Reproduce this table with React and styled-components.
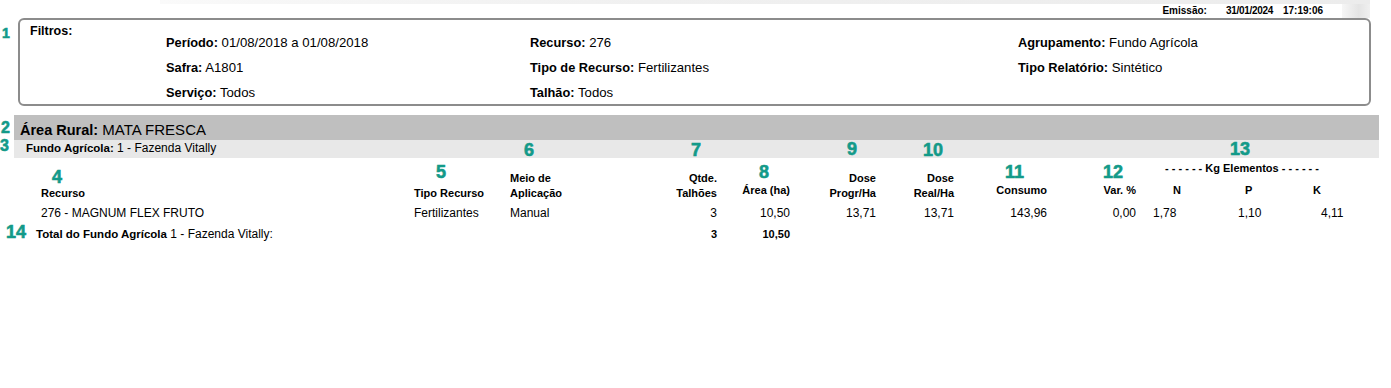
import styled, { createGlobalStyle } from "styled-components";

const GlobalStyle = createGlobalStyle`
  body {
    margin: 0;
    background: #fff;
    color: #000;
    font-family: "Liberation Sans", Arial, sans-serif;
  }
`;

const COLS = "378px 96px 140px 67px 73px 86px 78px 93px 89px 74px 60px 80px";

const Page = styled.div`
  position: relative;
  width: 1391px;
  height: 388px;
  overflow: hidden;
`;

const TopStrip = styled.div`
  display: flex;
  flex-direction: column;
  height: 18px;
`;

const FaintBar = styled.div`
  height: 4px;
  margin: 0 21px 0 160px;
  background: linear-gradient(to right, #fafafa 0%, #f7f7f7 8%, #f0f0f0 40%, #ececec 100%);
`;

const EmissaoRow = styled.div`
  display: flex;
  align-items: center;
  justify-content: flex-end;
  height: 14px;
  padding-right: 21px;
  font-size: 10px;
  font-weight: bold;
  line-height: 12px;
`;

const EmissaoDate = styled.span`
  margin-left: 19px;
  letter-spacing: -0.3px;
`;

const EmissaoTime = styled.span`
  margin-left: 10px;
`;

const Shade = styled.div`
  width: 28px;
  height: 14px;
  margin-left: 19px;
  background: linear-gradient(to right, #f6f6f6, #e4e4e4 60%, #f0f0f0);
`;

const FilterBox = styled.div`
  box-sizing: border-box;
  height: 88px;
  margin: 0 20px 0 18px;
  border: 2px solid #8c8c8c;
  border-radius: 6px;
  padding: 10px 0 0 10px;
  display: grid;
  grid-template-columns: 136px 364px 488px 1fr;
  grid-auto-rows: 25px;
  font-size: 13.2px;
  line-height: 25px;
`;

const FilterTitle = styled.div`
  font-size: 12.5px;
  font-weight: bold;
  line-height: 16px;
  margin-top: -7px;
`;

const FilterItem = styled.div`
  white-space: nowrap;
  b {
    font-size: 12.8px;
    font-weight: bold;
  }
`;

const AreaBand = styled.div`
  box-sizing: border-box;
  height: 25px;
  margin: 9px 12px 0 14px;
  padding: 5px 0 0 6px;
  background: #bfbfbf;
  font-size: 15px;
  line-height: 20px;
  b {
    font-size: 14.5px;
  }
`;

const FundoBand = styled.div`
  box-sizing: border-box;
  height: 18px;
  margin: 0 12px 0 14px;
  padding-left: 12px;
  background: #e8e8e8;
  font-size: 12px;
  line-height: 16px;
  b {
    font-size: 11.5px;
  }
`;

const Table = styled.div`
  margin: 3px 0 0 36px;
`;

const Row = styled.div`
  display: grid;
  grid-template-columns: ${COLS};
  align-items: ${(p) => (p.$head ? "end" : "start")};
  margin-top: ${(p) => p.$mt || 0}px;
  font-size: ${(p) => (p.$head ? 11 : 12)}px;
  font-weight: ${(p) => (p.$head ? "bold" : "normal")};
  line-height: 15px;
  white-space: nowrap;
`;

const Cell = styled.div`
  text-align: ${(p) => p.$align || "left"};
  padding-left: ${(p) => p.$pl || 0}px;
  padding-bottom: ${(p) => p.$pb || 0}px;
  font-weight: ${(p) => (p.$bold ? "bold" : "inherit")};
  font-size: ${(p) => (p.$fs ? `${p.$fs}px` : "inherit")};
  grid-column: ${(p) => p.$span || "auto"};
`;

const ElementGroup = styled.div`
  grid-column: span 3;
  display: grid;
  grid-template-columns: 74px 60px 80px;
`;

const KgLine = styled.div`
  grid-column: 1 / -1;
  padding-left: 29px;
  margin-bottom: 7px;
`;

const Marker = styled.span`
  position: absolute;
  left: ${(p) => p.$x}px;
  top: ${(p) => p.$y}px;
  font-size: ${(p) => p.$size || 18}px;
  font-weight: bold;
  line-height: 1;
  color: #139a89;
  -webkit-text-stroke: 0.6px #139a89;
`;

const markers = [
  { n: 1, x: 2, y: 26, size: 14 },
  { n: 2, x: 1, y: 120, size: 16 },
  { n: 3, x: 0, y: 138, size: 16 },
  { n: 4, x: 52, y: 168 },
  { n: 5, x: 436, y: 163 },
  { n: 6, x: 524, y: 141 },
  { n: 7, x: 691, y: 141 },
  { n: 8, x: 759, y: 163 },
  { n: 9, x: 847, y: 140 },
  { n: 10, x: 923, y: 141 },
  { n: 11, x: 1005, y: 163 },
  { n: 12, x: 1103, y: 163 },
  { n: 13, x: 1230, y: 140 },
  { n: 14, x: 6, y: 223 },
];

export default function App() {
  return (
    <Page>
      <GlobalStyle />
      <TopStrip>
        <FaintBar />
        <EmissaoRow>
          <span>Emissão:</span>
          <EmissaoDate>31/01/2024</EmissaoDate>
          <EmissaoTime>17:19:06</EmissaoTime>
          <Shade />
        </EmissaoRow>
      </TopStrip>

      <FilterBox>
        <FilterTitle>Filtros:</FilterTitle>
        <FilterItem><b>Período:</b> 01/08/2018 a 01/08/2018</FilterItem>
        <FilterItem><b>Recurso:</b> 276</FilterItem>
        <FilterItem><b>Agrupamento:</b> Fundo Agrícola</FilterItem>
        <div />
        <FilterItem><b>Safra:</b> A1801</FilterItem>
        <FilterItem><b>Tipo de Recurso:</b> Fertilizantes</FilterItem>
        <FilterItem><b>Tipo Relatório:</b> Sintético</FilterItem>
        <div />
        <FilterItem><b>Serviço:</b> Todos</FilterItem>
        <FilterItem><b>Talhão:</b> Todos</FilterItem>
      </FilterBox>

      <AreaBand><b>Área Rural:</b> MATA FRESCA</AreaBand>
      <FundoBand><b>Fundo Agrícola:</b> 1 - Fazenda Vitally</FundoBand>

      <Table>
        <Row $head>
          <Cell $pl={5}>Recurso</Cell>
          <Cell>Tipo Recurso</Cell>
          <Cell>Meio de<br />Aplicação</Cell>
          <Cell $align="right">Qtde.<br />Talhões</Cell>
          <Cell $align="right" $pb={3}>Área (ha)</Cell>
          <Cell $align="right">Dose<br />Progr/Ha</Cell>
          <Cell $align="right">Dose<br />Real/Ha</Cell>
          <Cell $align="right" $pb={3}>Consumo</Cell>
          <Cell $align="right" $pb={3}>Var. %</Cell>
          <ElementGroup>
            <KgLine>- - - - - - Kg Elementos - - - - - -</KgLine>
            <Cell $pl={37} $pb={3}>N</Cell>
            <Cell $pl={35} $pb={3}>P</Cell>
            <Cell $pl={43} $pb={3}>K</Cell>
          </ElementGroup>
        </Row>

        <Row $mt={5}>
          <Cell $pl={5}>276 - MAGNUM FLEX FRUTO</Cell>
          <Cell>Fertilizantes</Cell>
          <Cell>Manual</Cell>
          <Cell $align="right">3</Cell>
          <Cell $align="right">10,50</Cell>
          <Cell $align="right">13,71</Cell>
          <Cell $align="right">13,71</Cell>
          <Cell $align="right">143,96</Cell>
          <Cell $align="right">0,00</Cell>
          <Cell $pl={17}>1,78</Cell>
          <Cell $pl={28}>1,10</Cell>
          <Cell $pl={51}>4,11</Cell>
        </Row>

        <Row $mt={6}>
          <Cell $span="span 3">
            <Cell as="b" $bold $fs={11.5}>Total do Fundo Agrícola</Cell> 1 - Fazenda Vitally:
          </Cell>
          <Cell $align="right" $bold $fs={11}>3</Cell>
          <Cell $align="right" $bold $fs={11}>10,50</Cell>
        </Row>
      </Table>

      {markers.map((m) => (
        <Marker key={m.n} $x={m.x} $y={m.y} $size={m.size}>
          {m.n}
        </Marker>
      ))}
    </Page>
  );
}
